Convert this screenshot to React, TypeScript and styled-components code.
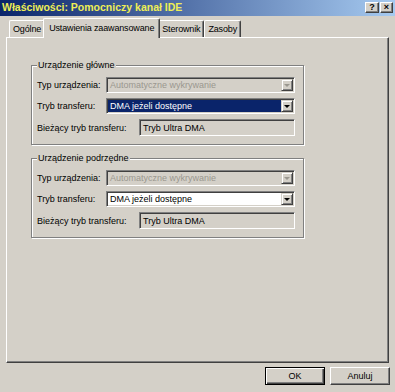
import styled, { createGlobalStyle } from 'styled-components';

const GlobalStyle = createGlobalStyle`
  html, body {
    margin: 0;
    padding: 0;
    background: #d4d0c8;
  }
  body {
    font-family: "Liberation Sans", Arial, sans-serif;
    font-size: 9px;
    color: #000;
  }
`;

const Window = styled.div`
  width: 395px;
  height: 392px;
  display: flex;
  flex-direction: column;
  background: #d4d0c8;
  overflow: hidden;
`;

const TitleBar = styled.div`
  height: 16px;
  display: flex;
  align-items: center;
  padding: 0 2px 0 2px;
  background: linear-gradient(to right, #0a246a, #a6caf0);
`;

const Title = styled.span`
  font-weight: bold;
  font-size: 10.5px;
  color: #eeee55;
  white-space: nowrap;
  margin-top: -3px;
`;

const CaptionButtons = styled.div`
  margin-left: auto;
  display: flex;
  gap: 1px;
  margin-top: -2px;
`;

const CaptionButton = styled.div<{ $w: number }>`
  box-sizing: border-box;
  width: ${({ $w }) => $w}px;
  height: 11px;
  display: flex;
  align-items: center;
  justify-content: center;
  background: #d4d0c8;
  border: 1px solid;
  border-color: #fff #404040 #404040 #fff;
  box-shadow: inset -1px -1px #808080;
  font-weight: bold;
  font-size: 9px;
  line-height: 9px;
`;

const TabStrip = styled.div`
  height: 21px;
  display: flex;
  align-items: flex-end;
  padding-left: 9px;
`;

const Tab = styled.div<{ $active?: boolean }>`
  box-sizing: border-box;
  height: ${({ $active }) => ($active ? 20 : 17)}px;
  margin: 0 ${({ $active }) => ($active ? -2 : 0)}px
    ${({ $active }) => ($active ? -1 : 0)}px;
  padding: ${({ $active }) => ($active ? '0 5px 2px' : '0 3px')};
  display: flex;
  align-items: center;
  white-space: nowrap;
  letter-spacing: -0.15px;
  background: #d4d0c8;
  border-top: 1px solid #fff;
  border-left: 1px solid #fff;
  border-right: 1px solid #404040;
  box-shadow: inset -1px 0 #808080;
  border-radius: 2px 2px 0 0;
  position: relative;
  z-index: ${({ $active }) => ($active ? 1 : 0)};
`;

const Panel = styled.div`
  box-sizing: border-box;
  height: 326px;
  margin: 0 6px;
  padding: 27px 0 0 24px;
  border-top: 1px solid #fff;
  border-left: 1px solid #fff;
  border-right: 1px solid #404040;
  border-bottom: 1px solid #404040;
  box-shadow: inset -1px -1px #808080;
  display: flex;
  flex-direction: column;
  gap: 13px;
`;

const Group = styled.div`
  box-sizing: border-box;
  width: 273px;
  border: 1px solid #808080;
  box-shadow: inset 1px 1px #fff, 1px 1px #fff;
  padding: 0 8px 8px 5px;
  display: flex;
  flex-direction: column;
`;

const Legend = styled.span`
  align-self: flex-start;
  margin-top: -6px;
  margin-bottom: 6px;
  padding: 0 1px;
  line-height: 11px;
  background: #d4d0c8;
`;

const Row = styled.div<{ $h?: number }>`
  height: ${({ $h }) => $h ?? 16}px;
  display: flex;
  align-items: center;
  & + & {
    margin-top: 5px;
  }
`;

const Label = styled.span<{ $w: number }>`
  width: ${({ $w }) => $w}px;
  flex: none;
  white-space: nowrap;
`;

const Combo = styled.div<{ $disabled?: boolean }>`
  box-sizing: border-box;
  width: 190px;
  height: 16px;
  display: flex;
  padding: 1px;
  border: 1px solid;
  border-color: #808080 #fff #fff #808080;
  box-shadow: inset 1px 1px #404040, inset -1px -1px #d4d0c8;
  background: ${({ $disabled }) => ($disabled ? '#d4d0c8' : '#fff')};
`;

const ComboValue = styled.div<{ $selected?: boolean; $disabled?: boolean }>`
  flex: 1;
  display: flex;
  align-items: center;
  padding-left: 2px;
  white-space: nowrap;
  overflow: hidden;
  background: ${({ $selected }) => ($selected ? '#0a246a' : 'transparent')};
  color: ${({ $selected, $disabled }) =>
    $selected ? '#fff' : $disabled ? '#9a978f' : '#000'};
`;

const DropButton = styled.div`
  box-sizing: border-box;
  width: 12px;
  flex: none;
  display: flex;
  align-items: center;
  justify-content: center;
  background: #d4d0c8;
  border: 1px solid;
  border-color: #d4d0c8 #404040 #404040 #d4d0c8;
  box-shadow: inset 1px 1px #fff, inset -1px -1px #808080;
`;

const Arrow = styled.span<{ $disabled?: boolean }>`
  width: 0;
  height: 0;
  border-left: 3px solid transparent;
  border-right: 3px solid transparent;
  border-top: 3px solid ${({ $disabled }) => ($disabled ? '#9a978f' : '#000')};
  margin-top: 1px;
`;

const ReadOnlyBox = styled.div`
  box-sizing: border-box;
  width: 158px;
  height: 17px;
  display: flex;
  align-items: center;
  padding-left: 3px;
  border: 1px solid;
  border-color: #808080 #fff #fff #808080;
  box-shadow: inset 1px 1px #404040, inset -1px -1px #d4d0c8;
  white-space: nowrap;
`;

const Footer = styled.div`
  display: flex;
  justify-content: flex-end;
  gap: 5px;
  padding: 4px 5px 0 0;
`;

const Button = styled.div<{ $default?: boolean }>`
  box-sizing: border-box;
  width: 60px;
  height: 18px;
  display: flex;
  align-items: center;
  justify-content: center;
  background: #d4d0c8;
  border: 1px solid;
  border-color: ${({ $default }) =>
    $default ? '#000' : '#fff #404040 #404040 #fff'};
  box-shadow: ${({ $default }) =>
    $default
      ? 'inset 1px 1px #fff, inset -1px -1px #404040, inset -2px -2px #808080'
      : 'inset -1px -1px #808080'};
`;

interface DeviceGroupProps {
  title: string;
  selected?: boolean;
}

function DeviceGroup({ title, selected }: DeviceGroupProps) {
  return (
    <Group>
      <Legend>{title}</Legend>
      <Row>
        <Label $w={69}>Typ urządzenia:</Label>
        <Combo $disabled>
          <ComboValue $disabled>Automatyczne wykrywanie</ComboValue>
          <DropButton>
            <Arrow $disabled />
          </DropButton>
        </Combo>
      </Row>
      <Row>
        <Label $w={69}>Tryb transferu:</Label>
        <Combo>
          <ComboValue $selected={selected}>DMA jeżeli dostępne</ComboValue>
          <DropButton>
            <Arrow />
          </DropButton>
        </Combo>
      </Row>
      <Row $h={17}>
        <Label $w={102}>Bieżący tryb transferu:</Label>
        <ReadOnlyBox>Tryb Ultra DMA</ReadOnlyBox>
      </Row>
    </Group>
  );
}

export default function App() {
  return (
    <>
      <GlobalStyle />
      <Window>
        <TitleBar>
          <Title>Właściwości: Pomocniczy kanał IDE</Title>
          <CaptionButtons>
            <CaptionButton $w={14}>?</CaptionButton>
            <CaptionButton $w={13}>×</CaptionButton>
          </CaptionButtons>
        </TitleBar>
        <TabStrip>
          <Tab>Ogólne</Tab>
          <Tab $active>Ustawienia zaawansowane</Tab>
          <Tab>Sterownik</Tab>
          <Tab>Zasoby</Tab>
        </TabStrip>
        <Panel>
          <DeviceGroup title="Urządzenie główne" selected />
          <DeviceGroup title="Urządzenie podrzędne" />
        </Panel>
        <Footer>
          <Button $default>OK</Button>
          <Button>Anuluj</Button>
        </Footer>
      </Window>
    </>
  );
}
